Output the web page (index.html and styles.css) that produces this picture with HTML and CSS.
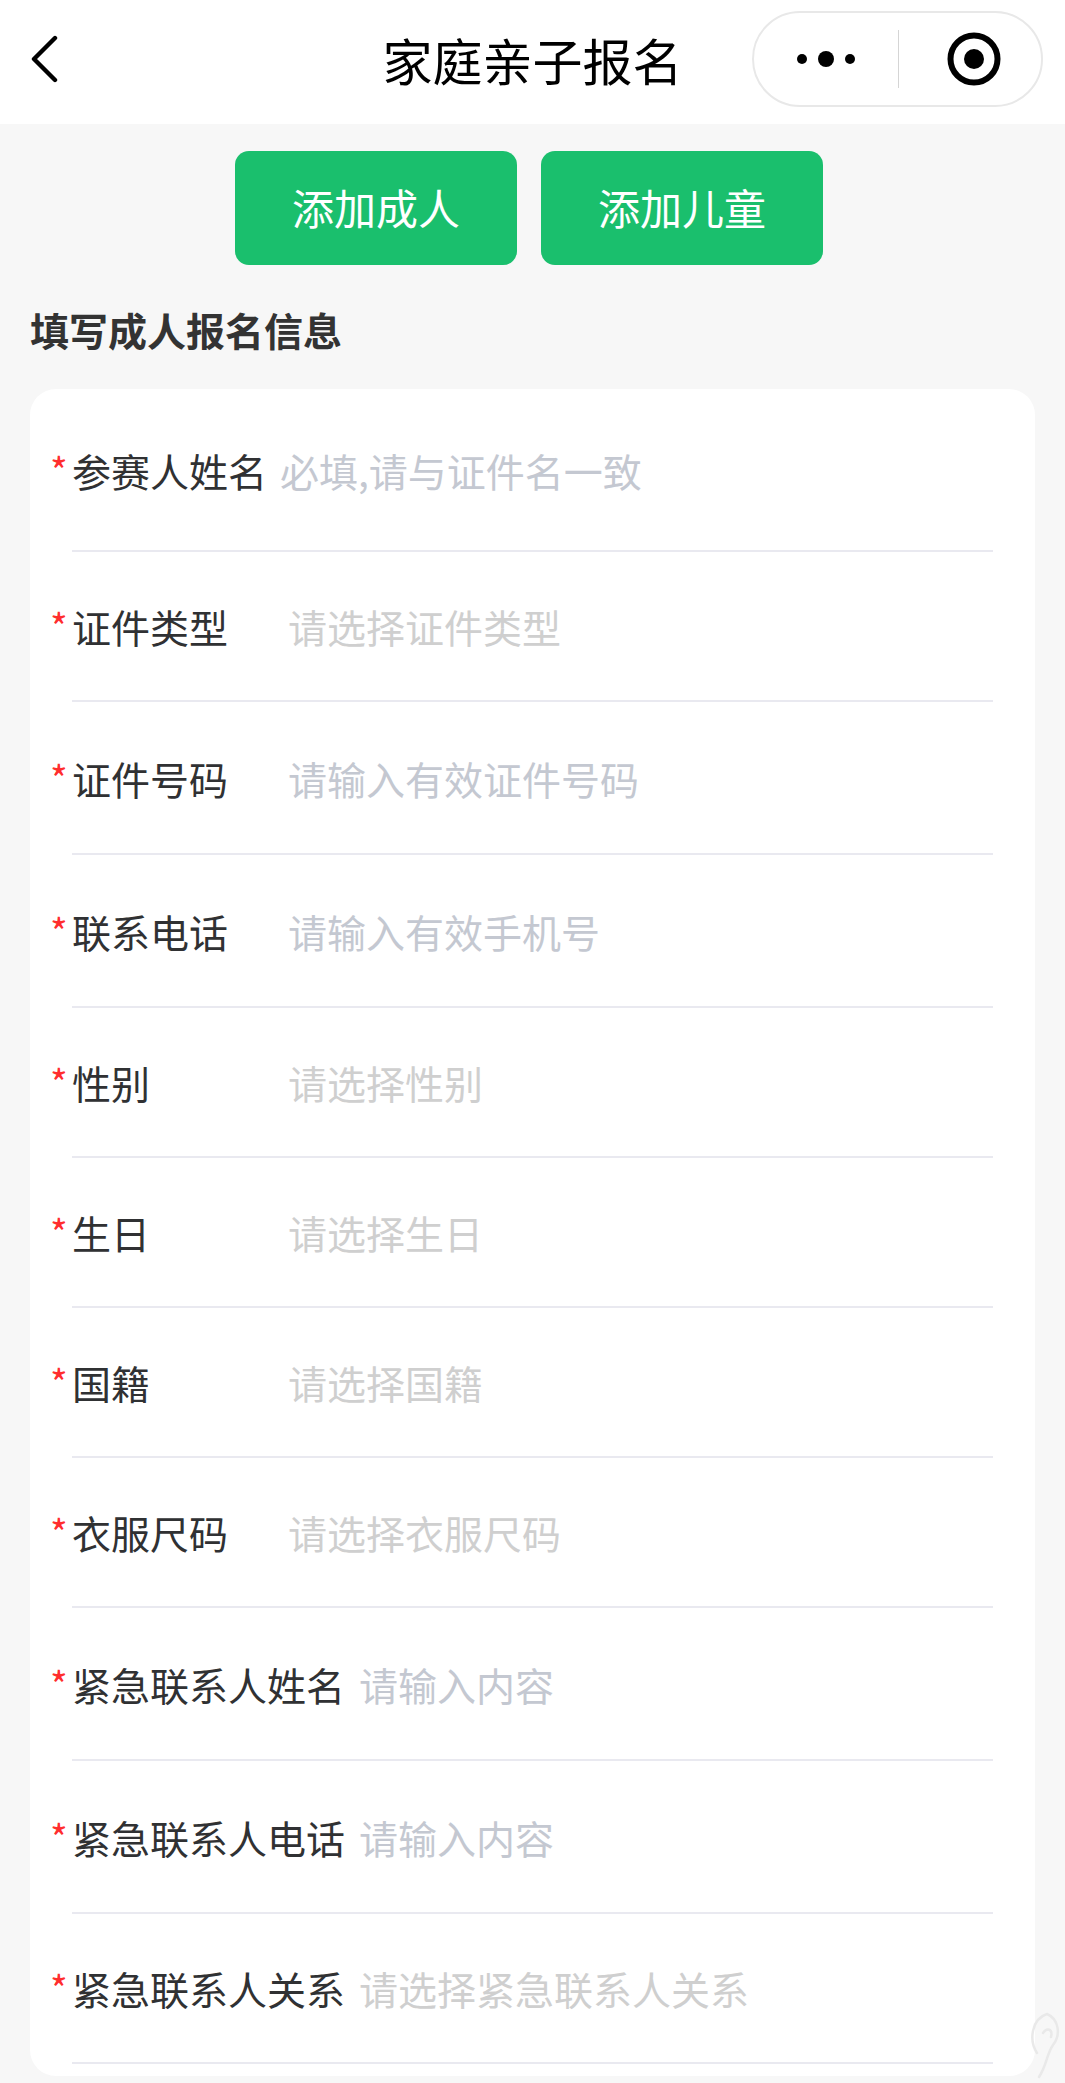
FILE: index.html
```html
<!DOCTYPE html>
<html lang="zh-CN">
<head>
<meta charset="utf-8">
<title>家庭亲子报名</title>
<link rel="stylesheet" href="styles.css">
</head>
<body>
<header class="navbar">
  <svg class="back" viewBox="0 0 32 48" width="32" height="48"><path d="M27 3 L6 24 L27 45" fill="none" stroke="#000" stroke-width="4.4" stroke-linecap="round" stroke-linejoin="round"/></svg>
  <h1 class="nav-title">家庭亲子报名</h1>
  <div class="capsule">
    <svg class="more" viewBox="0 0 60 20" width="60" height="20"><circle cx="6" cy="10" r="5" fill="#000"/><circle cx="30" cy="10" r="8" fill="#000"/><circle cx="54" cy="10" r="5" fill="#000"/></svg>
    <span class="capsule-divider"></span>
    <svg class="target" viewBox="0 0 54 54" width="54" height="54"><circle cx="27" cy="27" r="23.5" fill="none" stroke="#000" stroke-width="6"/><circle cx="27" cy="27" r="10" fill="#000"/></svg>
  </div>
</header>
<main class="page">
  <div class="actions">
    <button class="action">添加成人</button>
    <button class="action">添加儿童</button>
  </div>
  <h2 class="section-title">填写成人报名信息</h2>
  <section class="card">
    <div class="row row-first"><span class="star">*</span><label class="label label-auto">参赛人姓名</label><span class="hint input-hint hint-near">必填,请与证件名一致</span></div>
    <div class="row"><span class="star">*</span><label class="label">证件类型</label><span class="hint">请选择证件类型</span></div>
    <div class="row row-tall"><span class="star">*</span><label class="label">证件号码</label><span class="hint input-hint">请输入有效证件号码</span></div>
    <div class="row row-tall"><span class="star">*</span><label class="label">联系电话</label><span class="hint input-hint">请输入有效手机号</span></div>
    <div class="row"><span class="star">*</span><label class="label">性别</label><span class="hint">请选择性别</span></div>
    <div class="row"><span class="star">*</span><label class="label">生日</label><span class="hint">请选择生日</span></div>
    <div class="row"><span class="star">*</span><label class="label">国籍</label><span class="hint">请选择国籍</span></div>
    <div class="row"><span class="star">*</span><label class="label">衣服尺码</label><span class="hint">请选择衣服尺码</span></div>
    <div class="row row-tall"><span class="star">*</span><label class="label label-wide">紧急联系人姓名</label><span class="hint input-hint">请输入内容</span></div>
    <div class="row row-tall"><span class="star">*</span><label class="label label-wide">紧急联系人电话</label><span class="hint input-hint">请输入内容</span></div>
    <div class="row"><span class="star">*</span><label class="label label-wide">紧急联系人关系</label><span class="hint">请选择紧急联系人关系</span></div>
  </section>
</main>
<svg class="watermark" viewBox="0 0 40 70" width="40" height="70"><path d="M24 3 C8 8 6 30 14 42 M24 3 C36 8 38 24 30 34 C24 42 24 54 16 66 M20 22 C24 16 30 18 28 26" fill="none" stroke="#e9e9e9" stroke-width="2.5" stroke-linecap="round"/></svg>
</body>
</html>
```
FILE: styles.css
```css
* { box-sizing: border-box; }

html, body { margin: 0; padding: 0; }

body {
  position: relative;
  width: 1065px;
  height: 2083px;
  overflow: hidden;
  background: #f7f7f7;
  font-family: "Noto Sans CJK SC", "Noto Sans", sans-serif;
}

.navbar {
  position: relative;
  height: 124px;
  background: #fff;
  display: flex;
  align-items: center;
  justify-content: center;
}

.back { position: absolute; left: 28px; top: 35px; }

.nav-title {
  margin: 0 0 6px;
  font-size: 50px;
  font-weight: 400;
  line-height: 60px;
  color: #000;
}

.capsule {
  position: absolute;
  left: 752px;
  top: 11px;
  width: 291px;
  height: 96px;
  border: 2px solid #e8e8e8;
  border-radius: 48px;
  background: #fff;
  display: flex;
  align-items: center;
}

.more { margin-left: 42px; }

.capsule-divider {
  width: 1px;
  height: 58px;
  margin-left: 42px;
  background: #d5d5d5;
}

.target { margin-left: 48px; }

.page { padding: 27px 30px 0; }

.actions {
  display: flex;
  justify-content: center;
  gap: 24px;
  margin-left: -7px;
  margin-right: 0;
}

.action {
  width: 282px;
  height: 114px;
  padding: 0 0 4px;
  border: 0;
  border-radius: 14px;
  background: #1abf6d;
  color: #fff;
  font-family: inherit;
  font-size: 42px;
  font-weight: 400;
}

.section-title {
  margin: 36px 0 0;
  height: 88px;
  font-size: 39px;
  line-height: 56px;
  font-weight: 700;
  color: #333;
}

.card {
  height: 1687px;
  padding: 0 42px;
  background: #fff;
  border-radius: 26px;
}

.row {
  position: relative;
  height: 150px;
  display: flex;
  align-items: center;
  border-bottom: 2px solid #e9e9f0;
}

.row-tall { height: 153px; }
.row-first { height: 163px; }

.star {
  position: absolute;
  left: -22px;
  top: 50%;
  margin-top: -23px;
  font-size: 38px;
  line-height: 46px;
  color: #ff2d2d;
}

.label {
  flex: none;
  width: 216px;
  font-size: 39px;
  line-height: 56px;
  color: #303133;
}

.label-auto { width: auto; margin-right: 13px; }
.label-wide { width: auto; margin-right: 14px; }

.hint {
  font-size: 39px;
  line-height: 56px;
  color: #cfcfcf;
}

.input-hint { color: #c4c8d1; }

.watermark { position: absolute; right: 2px; bottom: 2px; }
```
